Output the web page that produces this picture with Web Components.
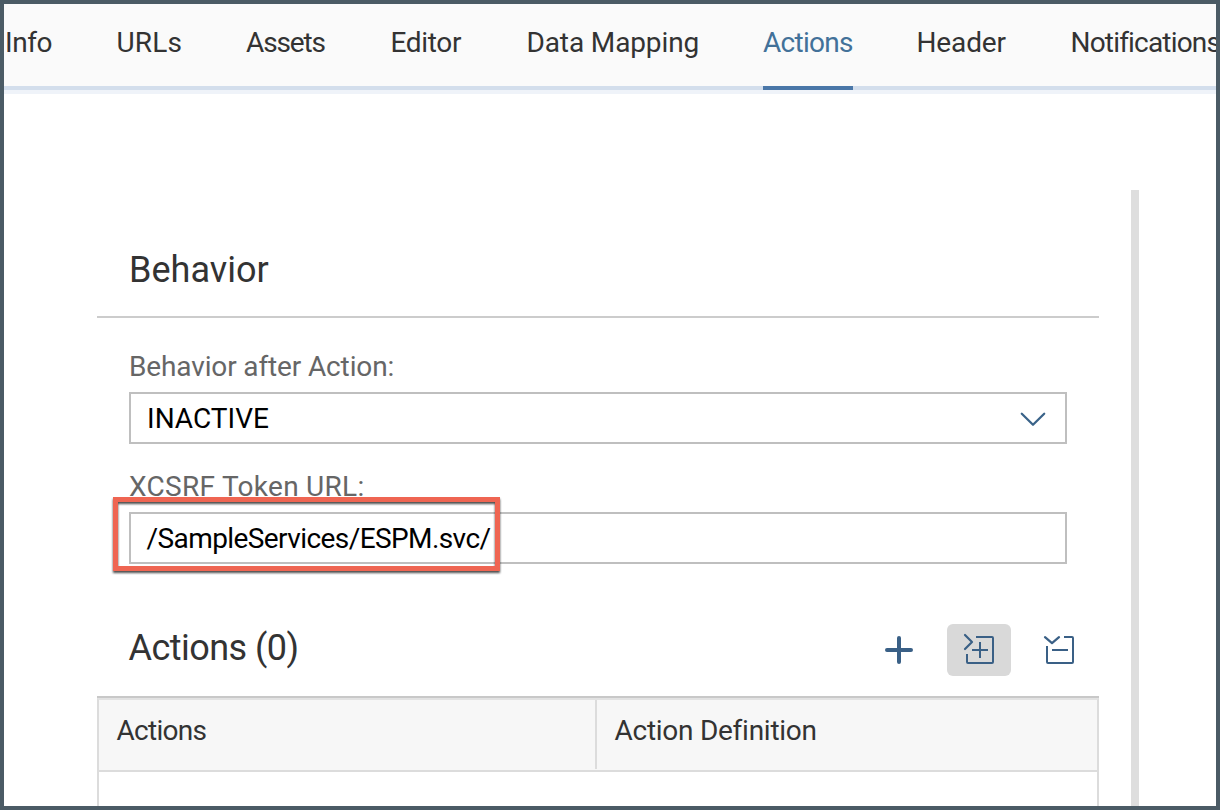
<!DOCTYPE html>
<html lang="en">
<head>
<meta charset="utf-8">
<title>Card Editor</title>
<style>
html,body{margin:0;height:100%;overflow:hidden;background:#fff}
body{font:28px/36px Roboto,"Liberation Sans",sans-serif;color:#333}
</style>
</head>
<body>
<card-editor></card-editor>
<script>
const define=(name,html,ready)=>customElements.define(name,class extends HTMLElement{
  connectedCallback(){
    if(this.shadowRoot)return;
    this.attachShadow({mode:'open'}).innerHTML=html;
    if(ready)ready.call(this);
  }
});

/* A label whose letters are tracked to fill exactly the width given. */
const ctx=document.createElement('canvas').getContext('2d');
define('fit-text',`<style>
:host{display:block;flex:none;white-space:nowrap;font-variant-ligatures:none}
span{display:block}
</style><span><slot></slot></span>`,function(){
  const w=+this.getAttribute('width'),cs=getComputedStyle(this),t=this.textContent;
  ctx.font=cs.fontWeight+' '+cs.fontSize+' '+cs.fontFamily;
  const m=ctx.measureText(t);
  const ink=m.actualBoundingBoxRight+m.actualBoundingBoxLeft;
  this.style.width=w+'px';
  const s=this.shadowRoot.querySelector('span');
  s.style.letterSpacing=((w-ink)/(t.length-1))+'px';
  s.style.marginLeft=m.actualBoundingBoxLeft+'px';
});

define('tab-item',`<style>
:host{display:block;flex:none;box-sizing:border-box;height:86px;padding-top:21px}
:host([selected]){color:#427199;border-bottom:4px solid #4a77a8}
</style><slot></slot>`);

define('tab-bar',`<style>
:host{display:block;flex:none;height:90px;overflow:hidden;
 background:linear-gradient(#fafafa 0 82px,#d3deec 82px 86px,#eff3f9 86px)}
nav{display:flex;width:1300px}
.info{margin-left:3px}.urls{margin-left:66px}.assets{margin-left:64.5px}.editor{margin-left:67px}
.data{margin-left:66.5px}.actions{margin-left:65.5px}.header{margin-left:65.5px}.notes{margin-left:66px}
</style><nav>
<tab-item class="info"><fit-text width="44.5">Info</fit-text></tab-item>
<tab-item class="urls"><fit-text width="64">URLs</fit-text></tab-item>
<tab-item class="assets"><fit-text width="79.5">Assets</fit-text></tab-item>
<tab-item class="editor"><fit-text width="69.5">Editor</fit-text></tab-item>
<tab-item class="data"><fit-text width="169">Data Mapping</fit-text></tab-item>
<tab-item class="actions" selected><fit-text width="90">Actions</fit-text></tab-item>
<tab-item class="header"><fit-text width="88">Header</fit-text></tab-item>
<tab-item class="notes"><fit-text width="147">Notifications</fit-text></tab-item>
</nav>`);

define('section-title',`<style>
:host{display:flex;align-items:center;box-sizing:border-box;height:96px;padding:2px 0 0 34px;
 border-bottom:2px solid #ccc;font-size:36px}
</style><slot></slot>`);

define('form-field',`<style>
:host{display:block;margin:0 32px;color:#666}
.label{height:44px;box-sizing:border-box;padding:1px 0 0 var(--label-inset,1px)}
.box{display:flex;align-items:center;justify-content:space-between;box-sizing:border-box;height:52px;
 border:2px solid #bfbfbf;padding:2px 19px 0 var(--value-inset,17px);background:#fff;color:#000}
</style><div class="label"><slot name="label"></slot></div><div class="box"><slot></slot></div>`);

define('down-arrow',`<style>:host{display:block;width:26px;height:16px}svg{display:block}</style>
<svg width="26" height="16" viewBox="0 0 26 16" fill="none" stroke="#3a6389" stroke-width="2.3" stroke-linecap="round" stroke-linejoin="round"><path d="M1.8 2.8 13 13.7 24.2 2.8"/></svg>`);

define('call-out',`<style>
:host{position:absolute;left:113px;top:497px;box-sizing:border-box;width:387px;height:73.5px;
 border:5px solid #ef6552;filter:drop-shadow(0 2px 1px rgba(0,0,0,.7));pointer-events:none}
</style>`);

define('tool-button',`<style>
:host{display:block;flex:none;width:64px;height:52px;border-radius:6px}
:host([pressed]){background:#d9d9d9}
svg{display:block;fill:none;stroke:#3a6086;stroke-width:2;stroke-linecap:round;stroke-linejoin:round}
</style><svg width="64" height="52" viewBox="0 0 64 52"></svg>`,function(){
  this.shadowRoot.querySelector('svg').innerHTML={
    add:'<path d="M20 26H44M32 14V38" stroke-width="4"/>',
    expand:'<path d="M18 11 25 18 18 25" stroke-width="2.2"/><path stroke-linecap="butt" d="M29 13H45Q46 13 46 14V38Q46 39 45 39H21Q20 39 20 38V30M25 26H41M33 18V34"/>',
    collapse:'<path d="M18 13.2 25 19.2 32 13.2" stroke-width="2.2"/><path stroke-linecap="butt" d="M37 13H45Q46 13 46 14V38Q46 39 45 39H21Q20 39 20 38V22M25 26H41"/>'
  }[this.getAttribute('icon')];
});

define('table-toolbar',`<style>
:host{display:flex;align-items:flex-start;justify-content:space-between;height:72px;padding-left:31.5px}
.title{font-size:36px;padding-top:6px}
.tools{display:flex;gap:16px;margin-right:8px}
</style><div class="title"><slot></slot></div><div class="tools">
<tool-button icon="add"></tool-button><tool-button icon="expand" pressed></tool-button><tool-button icon="collapse"></tool-button></div>`);

define('action-table',`<style>
:host{display:flex;flex-direction:column;flex:1;border-top:2px solid #c8c8c8}
.head{display:grid;grid-template-columns:500px 1fr;height:74px;box-sizing:border-box;
 border:2px solid #dcdcdc;border-top-color:#e2e2e2;background:#f7f7f7}
.head div{padding:13px 0 0 17.5px}
.head div:first-child{border-right:2px solid #dcdcdc;margin-bottom:1px;box-sizing:border-box;width:498px}
.body{flex:1;border:solid #dcdcdc;border-width:0 2px}
.head div+div{padding-left:15.5px}
</style><div class="head"><div><fit-text width="90">Actions</fit-text></div><div><fit-text width="200">Action Definition</fit-text></div></div><div class="body"></div>`);

define('card-editor',`<style>
:host{display:flex;flex-direction:column;box-sizing:border-box;width:1220px;height:810px;border:4px solid #4b5b65;overflow:hidden;background:#fff}
main{display:flex;flex:1;min-height:0;padding:0 77px 0 93px;justify-content:space-between}
.content{display:flex;flex-direction:column;width:1002px;padding-top:128px}
.scroll{width:8px;margin-top:96px;background:#dedede}
.first{margin-top:30px;--label-inset:2px;--value-inset:18px}
.second{margin-top:24px;--label-inset:0px;--value-inset:15.5px}
table-toolbar{margin-top:60px}
</style><tab-bar></tab-bar><main><div class="content">
<section-title><fit-text width="137.5">Behavior</fit-text></section-title>
<form-field class="first"><fit-text slot="label" width="261.5">Behavior after Action:</fit-text><fit-text width="119">INACTIVE</fit-text><down-arrow></down-arrow></form-field>
<form-field class="second"><fit-text slot="label" width="234">XCSRF Token URL:</fit-text><fit-text width="344">/SampleServices/ESPM.svc/</fit-text></form-field>
<table-toolbar><fit-text width="168">Actions (0)</fit-text></table-toolbar>
<action-table></action-table>
</div><div class="scroll"></div></main><call-out></call-out>`);
</script>
</body>
</html>
